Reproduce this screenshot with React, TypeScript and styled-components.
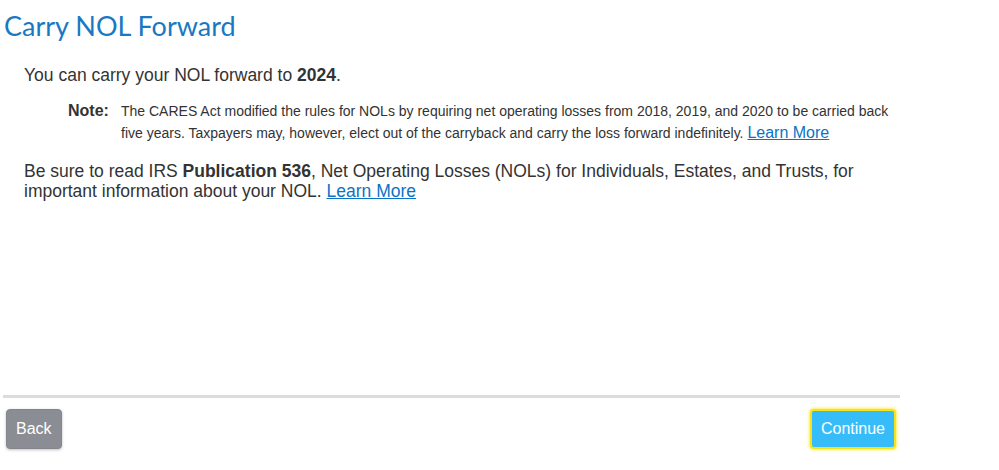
import React from 'react'
import styled, { createGlobalStyle } from 'styled-components'

const GlobalStyle = createGlobalStyle`
  html, body {
    margin: 0;
    padding: 0;
    background: #fff;
  }
  body {
    font-family: "Liberation Sans", Arial, sans-serif;
    color: #333;
  }
`

const Page = styled.div`
  width: 897px;
  height: 470px;
  margin-left: 3px;
  display: flex;
  flex-direction: column;
`
const Content = styled.div`
  flex: 1;
  display: flex;
  flex-direction: column;
`
const Title = styled.h1`
  margin: 10px 0 0 1px;
  font-family: Lato, "Open Sans", sans-serif;
  font-weight: 400;
  font-size: 27px;
  line-height: 32px;
  color: #1a78c2;
`
const Body = styled.div`
  padding-left: 21px;
`
const Lead = styled.p`
  margin: 23px 0 0;
  font-size: 17.5px;
  line-height: 20px;
  color: #333;
`
const NoteBox = styled.div`
  margin: 15px 0 0 44px;
  display: grid;
  grid-template-columns: 53px 1fr;
  align-items: start;
`
const NoteLabel = styled.span`
  font-weight: 700;
  font-size: 16px;
  line-height: 22px;
  color: #333;
`
const NoteText = styled.p`
  margin: 0;
  font-size: 14px;
  line-height: 22px;
  color: #333;
`
const Link = styled.a<{ $size?: number }>`
  color: #0b73c4;
  text-decoration: underline;
  font-size: ${({ $size }) => ($size ? `${$size}px` : 'inherit')};
  cursor: pointer;
`
const Para = styled.p`
  margin: 17px 0 0;
  font-size: 17.5px;
  line-height: 20px;
  color: #333;
`
const Divider = styled.hr`
  margin: 0;
  border: none;
  height: 3px;
  background: #dcdcdc;
`
const Footer = styled.div`
  display: flex;
  justify-content: space-between;
  padding: 11px 4px 21px 3px;
`
const Button = styled.button<{ $primary?: boolean }>`
  height: 40px;
  padding: 0 9px;
  border-radius: 4px;
  font-family: "Liberation Sans", Arial, sans-serif;
  font-size: 16px;
  color: #fff;
  cursor: pointer;
  background: ${({ $primary }) => ($primary ? '#36bdf9' : '#8a8d94')};
  border: ${({ $primary }) => ($primary ? '2px solid #f6e31a' : '1px solid #83868c')};
  box-shadow: ${({ $primary }) =>
    $primary ? '0 0 3px 1px rgba(250, 230, 40, 0.8)' : '0 1px 3px rgba(0, 0, 0, 0.25)'};
`

const App = () => {
  return (
    <>
      <GlobalStyle />
      <Page>
        <Content>
          <Title>Carry NOL Forward</Title>
          <Body>
            <Lead>
              You can carry your NOL forward to <b>2024</b>.
            </Lead>
            <NoteBox>
              <NoteLabel>Note:</NoteLabel>
              <NoteText>
                The CARES Act modified the rules for NOLs by requiring net operating losses from 2018, 2019, and 2020
                to be carried back five years. Taxpayers may, however, elect out of the carryback and carry the loss
                forward indefinitely. <Link $size={16}>Learn More</Link>
              </NoteText>
            </NoteBox>
            <Para>
              Be sure to read IRS <b>Publication 536</b>, Net Operating Losses (NOLs) for Individuals, Estates, and
              Trusts, for important information about your NOL. <Link>Learn More</Link>
            </Para>
          </Body>
        </Content>
        <Divider />
        <Footer>
          <Button>Back</Button>
          <Button $primary>Continue</Button>
        </Footer>
      </Page>
    </>
  )
}

export default App
